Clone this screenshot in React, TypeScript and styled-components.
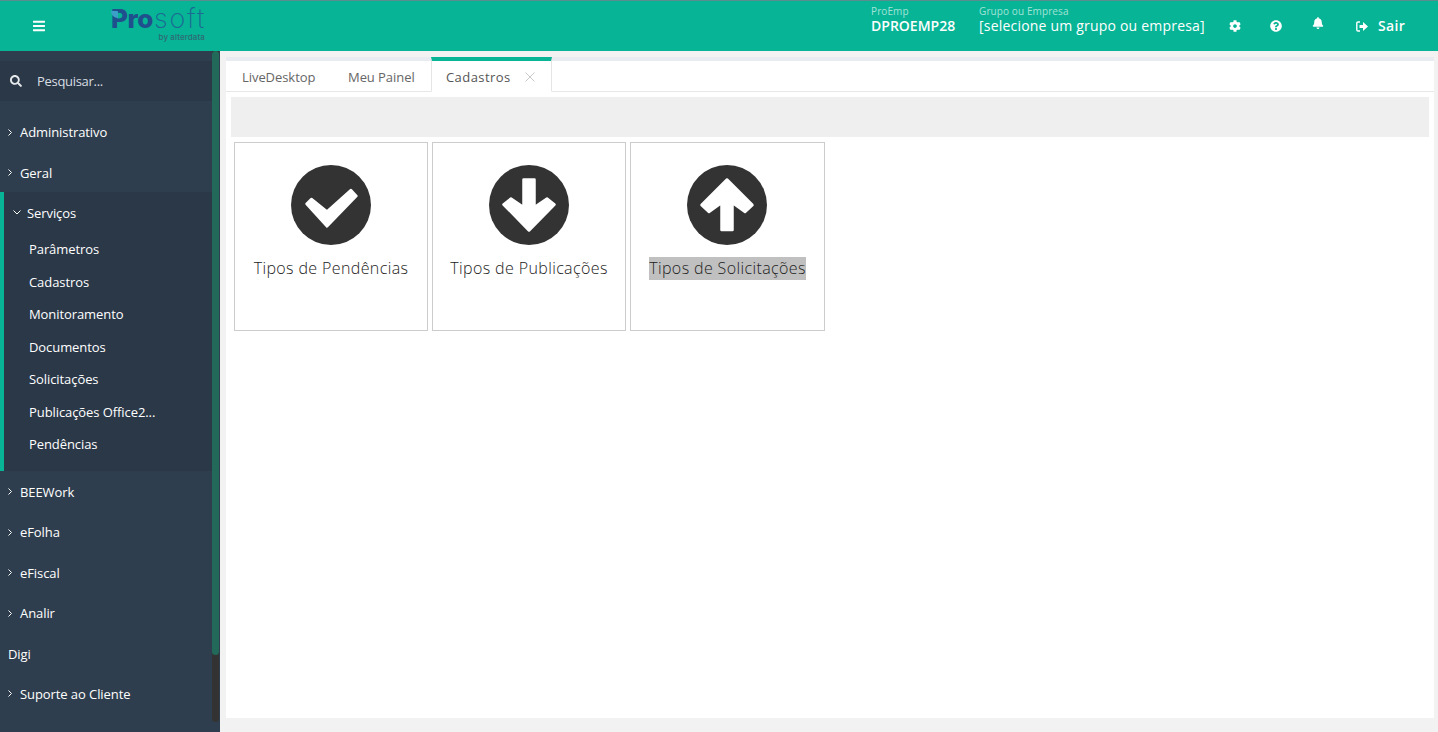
import React from "react";
import styled, { createGlobalStyle } from "styled-components";
import { FaBars, FaSearch, FaCog, FaQuestionCircle, FaBell } from "react-icons/fa";

const Global = createGlobalStyle`
  html, body { margin: 0; padding: 0; height: 100%; overflow: hidden; }
  body { font-family: "Open Sans", "Liberation Sans", sans-serif; background: #f2f2f2; }
  * { box-sizing: border-box; }
`;

const Page = styled.div`
  width: 1438px; height: 732px; display: flex; flex-direction: column; overflow: hidden;
`;
const Header = styled.header`
  height: 51px; flex: none; background: #07b496; border-top: 1px solid #5b8d8f;
  display: flex; align-items: flex-start; color: #fff;
`;
const Burger = styled.div`
  width: 111px; flex: none; padding: 18px 0 0 33px; font-size: 13px; line-height: 13px;
  & svg { display: block; width: 12px; height: 14px; }
`;
const Logo = styled.div`
  width: 100px; flex: none; position: relative; height: 50px; padding-top: 4px;
`;
const LogoWord = styled.div`
  display: flex; align-items: baseline; height: 28px; line-height: 28px;
`;
const LogoBold = styled.span`
  font-family: "Inter", sans-serif; font-weight: 800; color: #1f4f8c; font-size: 26px; letter-spacing: -0.4px;
`;
const LogoThin = styled.span`
  font-family: "Inter", sans-serif; font-weight: 200; color: #1c6a92; font-size: 27px; letter-spacing: 1.7px; margin-left: 1px;
`;
const LogoDrop = styled.svg`
  position: absolute; left: 0; top: 10px; width: 7px; height: 7px;
`;
const LogoSub = styled.div`
  font-family: "Inter", sans-serif; font-size: 8px; font-weight: 500; line-height: 8px; color: #2f6a74; text-align: right; width: 94px; margin-top: 0; letter-spacing: 0.1px;
`;
const HeaderRight = styled.div`
  margin-left: auto; display: flex; align-items: flex-start; padding-right: 33px;
`;
const Field = styled.div<{ $w: number }>`
  width: ${(p) => p.$w}px; padding-top: 4px;
`;
const FieldLabel = styled.div`
  font-size: 10px; line-height: 12px; color: #a3e3d6; letter-spacing: 0.1px;
`;
const FieldValue = styled.div<{ $bold?: boolean }>`
  font-size: 14px; line-height: 18px; margin-top: 0; white-space: nowrap;
  font-weight: ${(p) => (p.$bold ? 600 : 400)};
  letter-spacing: ${(p) => (p.$bold ? "0" : "0.2px")};
`;
const HeadIcon = styled.div<{ $w: number; $top?: number }>`
  width: ${(p) => p.$w}px; padding-top: ${(p) => p.$top ?? 19}px; font-size: 12px; line-height: 12px;
  & svg { display: block; }
`;
const Exit = styled.div`
  display: flex; align-items: center; gap: 10px; padding-top: 16px; font-size: 14px; line-height: 18px; font-weight: 600;
  letter-spacing: 0.3px;
  & svg { display: block; }
`;
const Body = styled.div`
  flex: 1; display: flex; min-height: 0;
`;
const Side = styled.aside`
  width: 220px; flex: none; background: #2f3e4e; display: flex; padding-right: 1px;
`;
const Nav = styled.nav`
  width: 212px; flex: none; padding-top: 10px; color: #fff; font-size: 13px; letter-spacing: -0.08px;
`;
const Search = styled.div`
  height: 40px; background: #2b3848; display: flex; align-items: center; padding-left: 10px; gap: 15px;
  color: #d8dde2; margin-bottom: 11px; letter-spacing: -0.3px;
  & svg { display: block; width: 12px; height: 12px; color: #e6e9ec; }
`;
const Item = styled.div`
  height: 40.4px; display: flex; align-items: center; padding-left: 8px; gap: 8px; white-space: nowrap;
`;
const Chevron = styled.svg`
  width: 4px; height: 7px; flex: none; display: block;
`;
const Group = styled.div`
  background: #2b3848; border-left: 4px solid #07b496; margin: -0.8px 0 0.8px; height: 279px;
`;
const GroupHead = styled.div`
  height: 41px; display: flex; align-items: center; padding: 1px 0 0 9px; gap: 6px;
`;
const ChevronDown = styled.svg`
  width: 8px; height: 5px; flex: none; display: block;
`;
const SubItem = styled.div`
  height: 32.5px; display: flex; align-items: center; padding-left: 25px; white-space: nowrap;
`;
const Scroll = styled.div`
  width: 7px; flex: none; height: 671px; background: #333; border-radius: 0 0 4px 4px; overflow: hidden;
`;
const Thumb = styled.div`
  height: 604px; background: #22695a; border-radius: 4px;
`;
const Main = styled.main`
  flex: 1; min-width: 0; padding: 6px 4px 14px 6px; display: flex;
`;
const Panel = styled.div`
  flex: 1; background: #fff; display: flex; flex-direction: column;
`;
const TabStrip = styled.div`
  height: 35px; flex: none; display: flex; align-items: stretch;
  border-top: 4px solid #e8ebef; border-bottom: 1px solid #e7e7e7; position: relative;
`;
const Tab = styled.div<{ $w: number; $pad: number }>`
  width: ${(p) => p.$w}px; padding: 2px 0 0 ${(p) => p.$pad}px; display: flex; align-items: center;
  font-size: 13px; color: #666; letter-spacing: -0.06px;
`;
const ActiveTab = styled.div`
  width: 121px; height: 35px; margin: -4px 0 -1px -1px; border-top: 4px solid #07b496; border-left: 1px solid #e5e5e5; border-right: 1px solid #e5e5e5;
  padding: 2px 0 0 14px; background: #fff; display: flex; align-items: center; font-size: 13px; font-weight: 400; color: #555; letter-spacing: 0.42px;
  border-bottom: 1px solid #fff;
`;
const Close = styled.svg`
  width: 10px; height: 10px; margin-left: 14px; display: block;
`;
const Toolbar = styled.div`
  height: 40px; flex: none; margin: 5px; background: #efefef;
`;
const Cards = styled.div`
  display: flex; gap: 4px; padding-left: 8px;
`;
const Card = styled.div<{ $w: number }>`
  width: ${(p) => p.$w}px; height: 189px; border: 1px solid #ccc; padding-top: 22px;
  display: flex; flex-direction: column; align-items: center; background: #fff;
`;
const CardIcon = styled.svg<{ $shift?: boolean }>`
  width: 80px; height: 80px; display: block; flex: none;
  margin-right: ${(p) => (p.$shift ? 1 : 0)}px;
`;
const CardLabel = styled.span<{ $selected?: boolean }>`
  margin-top: 12px; font-size: 16px; line-height: 23px; font-weight: 300; color: #222; white-space: nowrap;
  letter-spacing: 0.38px;
  background: ${(p) => (p.$selected ? "#c0c0c0" : "transparent")};
`;

const Right = () => (
  <Chevron viewBox="0 0 4 7"><path d="M.5.5 3.5 3.5.5 6.5" fill="none" stroke="#fff" strokeWidth="1" /></Chevron>
);

const Row = ({ t }: { t: string }) => (
  <Item><Right />{t}</Item>
);

const ArrowIcon = ({ d, shift }: { d: string; shift?: boolean }) => (
  <CardIcon viewBox="0 0 80 80" $shift={shift}>
    <circle cx="40" cy="40" r="40" fill="#333" />
    <path d={d} fill="#fff" stroke="#fff" strokeWidth="2.5" strokeLinejoin="round" />
  </CardIcon>
);

export default function App() {
  return (
    <Page>
      <Global />
      <Header>
        <Burger><FaBars /></Burger>
        <Logo>
          <LogoDrop viewBox="0 0 7 7"><path d="M0 0h6a1 1 0 0 1 1 1v6C3 7 0 4 0 0z" fill="#3aa0c8" /></LogoDrop>
          <LogoWord><LogoBold>Pro</LogoBold><LogoThin>soft</LogoThin></LogoWord>
          <LogoSub>by alterdata</LogoSub>
        </Logo>
        <HeaderRight>
          <Field $w={108}>
            <FieldLabel>ProEmp</FieldLabel>
            <FieldValue $bold>DPROEMP28</FieldValue>
          </Field>
          <Field $w={250}>
            <FieldLabel>Grupo ou Empresa</FieldLabel>
            <FieldValue>[selecione um grupo ou empresa]</FieldValue>
          </Field>
          <HeadIcon $w={41}><FaCog /></HeadIcon>
          <HeadIcon $w={42}><FaQuestionCircle /></HeadIcon>
          <HeadIcon $w={44} $top={16}><FaBell /></HeadIcon>
          <Exit>
            <svg width="12" height="11" viewBox="0 0 12 11">
              <path d="M4 1H2a1.2 1.2 0 0 0-1.2 1.2v6.6A1.2 1.2 0 0 0 2 10h2" fill="none" stroke="#fff" strokeWidth="1.4" />
              <path d="M3.5 4H7V1l5 4.5L7 10V7H3.500z" fill="#fff" />
            </svg>
            Sair
          </Exit>
        </HeaderRight>
      </Header>
      <Body>
        <Side>
          <Nav>
            <Search><FaSearch />Pesquisar...</Search>
            <Row t="Administrativo" />
            <Row t="Geral" />
            <Group>
              <GroupHead>
                <ChevronDown viewBox="0 0 8 5"><path d="M.5.5 4 4 7.500.5" fill="none" stroke="#fff" strokeWidth="1" /></ChevronDown>
                Serviços
              </GroupHead>
              {["Parâmetros", "Cadastros", "Monitoramento", "Documentos", "Solicitações", "Publicações Office2...", "Pendências"].map((t) => (
                <SubItem key={t}>{t}</SubItem>
              ))}
            </Group>
            <Row t="BEEWork" />
            <Row t="eFolha" />
            <Row t="eFiscal" />
            <Row t="Analir" />
            <Item>Digi</Item>
            <Row t="Suporte ao Cliente" />
          </Nav>
          <Scroll><Thumb /></Scroll>
        </Side>
        <Main>
          <Panel>
            <TabStrip>
              <Tab $w={106} $pad={16}>LiveDesktop</Tab>
              <Tab $w={100} $pad={16}>Meu Painel</Tab>
              <ActiveTab>
                Cadastros
                <Close viewBox="0 0 10 10"><path d="M.5.5l9 9M9.500.5l-9 9" stroke="#c8c8c8" strokeWidth="1" fill="none" /></Close>
              </ActiveTab>
            </TabStrip>
            <Toolbar />
            <Cards>
              <Card $w={194}>
                <ArrowIcon d="M15.500 39l5-5L36 46.500 60 25l5.500 6L36 61.500z" />
                <CardLabel>Tipos de Pendências</CardLabel>
              </Card>
              <Card $w={194}>
                <ArrowIcon d="M34.500 14.500h11V42L58 33.500l7.500 6L40 65.500 14.500 39.500l7.500-6L34.500 42z" />
                <CardLabel>Tipos de Publicações</CardLabel>
              </Card>
              <Card $w={195}>
                <ArrowIcon shift d="M34.500 65h11V38L58 47l7.500-7L40 14.500 14.500 40l7.500 7 12.500-9z" />
                <CardLabel $selected>Tipos de Solicitações</CardLabel>
              </Card>
            </Cards>
          </Panel>
        </Main>
      </Body>
    </Page>
  );
}
